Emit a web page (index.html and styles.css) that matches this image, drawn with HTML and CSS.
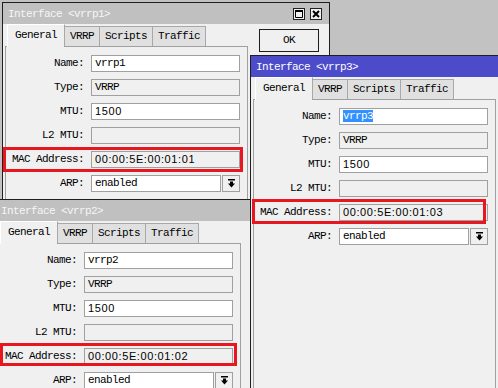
FILE: index.html
```html
<!DOCTYPE html>
<html lang="en">
<head>
    <meta charset="UTF-8">
    <title>Interface vrrp</title>
    <link rel="stylesheet" href="styles.css">
</head>
<body>
    <div class="desktop">

        <!-- vrrp1 (back) -->
        <div class="win win-1">
            <div class="titlebar">
                <span class="title">Interface &lt;vrrp1&gt;</span>
                <span class="ctl-group">
                    <span class="ctl"><svg width="8" height="8" viewBox="0 0 8 8"><path d="M0.5 0.5h7v7h-7z" fill="none" stroke="#000"/><rect x="0" y="0" width="8" height="2"/></svg></span>
                    <span class="ctl"><svg width="8" height="8" viewBox="0 0 8 8"><path d="M1 1L7 7M7 1L1 7" stroke="#000" stroke-width="2"/></svg></span>
                </span>
            </div>
            <div class="win-body">
                <div class="tabbox">
                    <div class="tabs"><span class="tab active">General</span><span class="tab">VRRP</span><span class="tab">Scripts</span><span class="tab">Traffic</span></div>
                    <div class="panel">
                        <div class="row"><span class="label">Name:</span><span class="field">vrrp1</span></div>
                        <div class="row"><span class="label">Type:</span><span class="field ro">VRRP</span></div>
                        <div class="row"><span class="label">MTU:</span><span class="field num">1500</span></div>
                        <div class="row"><span class="label">L2 MTU:</span><span class="field ro"></span></div>
                        <div class="row"><span class="label">MAC Address:</span><span class="field ro num">00:00:5E:00:01:01</span></div>
                        <div class="row"><span class="label">ARP:</span><span class="field combo">enabled</span><span class="drop"><svg width="7" height="9" viewBox="0 0 7 9"><rect x="0" y="0" width="7" height="1.5"/><path d="M2 2.5h3v2h2l-3.5 4l-3.5-4h2z"/></svg></span></div>
                    </div>
                </div>
                <div class="side">
                    <span class="btn">OK</span>
                </div>
            </div>
        </div>

        <!-- vrrp2 -->
        <div class="win win-2">
            <div class="titlebar">
                <span class="title">Interface &lt;vrrp2&gt;</span>
            </div>
            <div class="win-body">
                <div class="tabbox">
                    <div class="tabs"><span class="tab active">General</span><span class="tab">VRRP</span><span class="tab">Scripts</span><span class="tab">Traffic</span></div>
                    <div class="panel">
                        <div class="row"><span class="label">Name:</span><span class="field">vrrp2</span></div>
                        <div class="row"><span class="label">Type:</span><span class="field ro">VRRP</span></div>
                        <div class="row"><span class="label">MTU:</span><span class="field num">1500</span></div>
                        <div class="row"><span class="label">L2 MTU:</span><span class="field ro"></span></div>
                        <div class="row"><span class="label">MAC Address:</span><span class="field ro num">00:00:5E:00:01:02</span></div>
                        <div class="row"><span class="label">ARP:</span><span class="field combo">enabled</span><span class="drop"><svg width="7" height="9" viewBox="0 0 7 9"><rect x="0" y="0" width="7" height="1.5"/><path d="M2 2.5h3v2h2l-3.5 4l-3.5-4h2z"/></svg></span></div>
                    </div>
                </div>
            </div>
        </div>

        <!-- vrrp3 (active) -->
        <div class="win win-3">
            <div class="titlebar">
                <span class="title">Interface &lt;vrrp3&gt;</span>
            </div>
            <div class="win-body">
                <div class="tabbox">
                    <div class="tabs"><span class="tab active">General</span><span class="tab">VRRP</span><span class="tab">Scripts</span><span class="tab">Traffic</span></div>
                    <div class="panel">
                        <div class="row"><span class="label">Name:</span><span class="field"><span class="sel">vrrp3</span></span></div>
                        <div class="row"><span class="label">Type:</span><span class="field ro">VRRP</span></div>
                        <div class="row"><span class="label">MTU:</span><span class="field num">1500</span></div>
                        <div class="row"><span class="label">L2 MTU:</span><span class="field ro"></span></div>
                        <div class="row"><span class="label">MAC Address:</span><span class="field ro num">00:00:5E:00:01:03</span></div>
                        <div class="row"><span class="label">ARP:</span><span class="field combo">enabled</span><span class="drop"><svg width="7" height="9" viewBox="0 0 7 9"><rect x="0" y="0" width="7" height="1.5"/><path d="M2 2.5h3v2h2l-3.5 4l-3.5-4h2z"/></svg></span></div>
                    </div>
                </div>
            </div>
        </div>

        <!-- red highlight boxes drawn over the screenshot -->
        <div class="mark mark-1"></div>
        <div class="mark mark-2"></div>
        <div class="mark mark-3"></div>
    </div>
</body>
</html>
```

FILE: styles.css
```css
* { box-sizing: border-box; }
body { margin: 0; background: #c2c2c2; font-family: "Liberation Mono", "DejaVu Sans Mono", monospace; font-size: 11px; letter-spacing: -0.6px; color: #000; }
.desktop { position: relative; width: 498px; height: 388px; overflow: hidden; }

/* windows */
.win { position: absolute; background: #f0f0f0; border: 1px solid #1e1e1e; }
.win-1 { left: 2px; top: 2px; width: 328px; height: 240px; z-index: 1; }
.win-2 { left: -5px; top: 199px; width: 256px; height: 220px; z-index: 2; }
.win-3 { left: 250px; top: 55px; width: 330px; height: 360px; z-index: 3; }

.titlebar { height: 21px; display: flex; align-items: center; justify-content: space-between; padding: 0 7px 0 5px; background: #c0c0c0; color: #f6f6f6; white-space: nowrap; }
.win-3 .titlebar { background: #4c4ccb; color: #fff; }
.ctl-group { display: flex; gap: 5px; }
.ctl { width: 12px; height: 12px; border: 1px solid #202020; background: #f0f0f0; display: flex; align-items: center; justify-content: center; }

.win-body { display: flex; align-items: flex-start; padding: 1px 0 0 2px; }
.tabbox { width: 243px; flex-shrink: 0; }

/* tabs */
.tabs { display: flex; align-items: flex-end; height: 22px; position: relative; z-index: 1; margin-bottom: -1px; }
.tab { height: 20px; line-height: 19px; padding: 0 5px; margin-bottom: 1px; border: 1px solid #a8a8a8; border-bottom: none; background: #e0e0e0; white-space: nowrap; }
.tab + .tab { margin-left: -1px; }
.tab.active { height: 23px; line-height: 21px; margin: 0 0 0 2px; padding: 0 7px; background: #f0f0f0; border-color: #fff #a0a0a0 #f0f0f0 #fff; }

.panel { height: 400px; border: 1px solid #a0a0a0; padding-top: 4px; }

/* form rows */
.row { display: flex; align-items: center; height: 24px; }
.label { width: 78px; margin-right: 7px; text-align: right; white-space: nowrap; }
.field { width: 149px; height: 17px; line-height: 15px; padding-left: 3px; border: 1px solid #a0a0a0; background: #fff; white-space: nowrap; }
.field.ro { background: #f0f0f0; }
.field.combo { width: 130px; }
.num { font-family: "Liberation Sans", Arial, sans-serif; letter-spacing: 0.6px; }
.sel { background: #3390ff; color: #fff; }
.drop { width: 18px; height: 17px; margin-left: 1px; border: 1px solid #a0a0a0; background: #f0f0f0; display: flex; align-items: center; justify-content: center; }

.side { margin: 4px 0 0 11px; }
.btn { display: block; width: 60px; height: 23px; line-height: 21px; text-align: center; border: 1px solid #1e1e1e; background: #f0f0f0; }

/* annotation boxes */
.mark { position: absolute; border: 3px solid #e8161f; z-index: 5; }
.mark-1 { left: 3px; top: 147px; width: 240px; height: 25px; }
.mark-2 { left: 0; top: 343px; width: 237px; height: 23px; }
.mark-3 { left: 252px; top: 199px; width: 234px; height: 25px; }
```
